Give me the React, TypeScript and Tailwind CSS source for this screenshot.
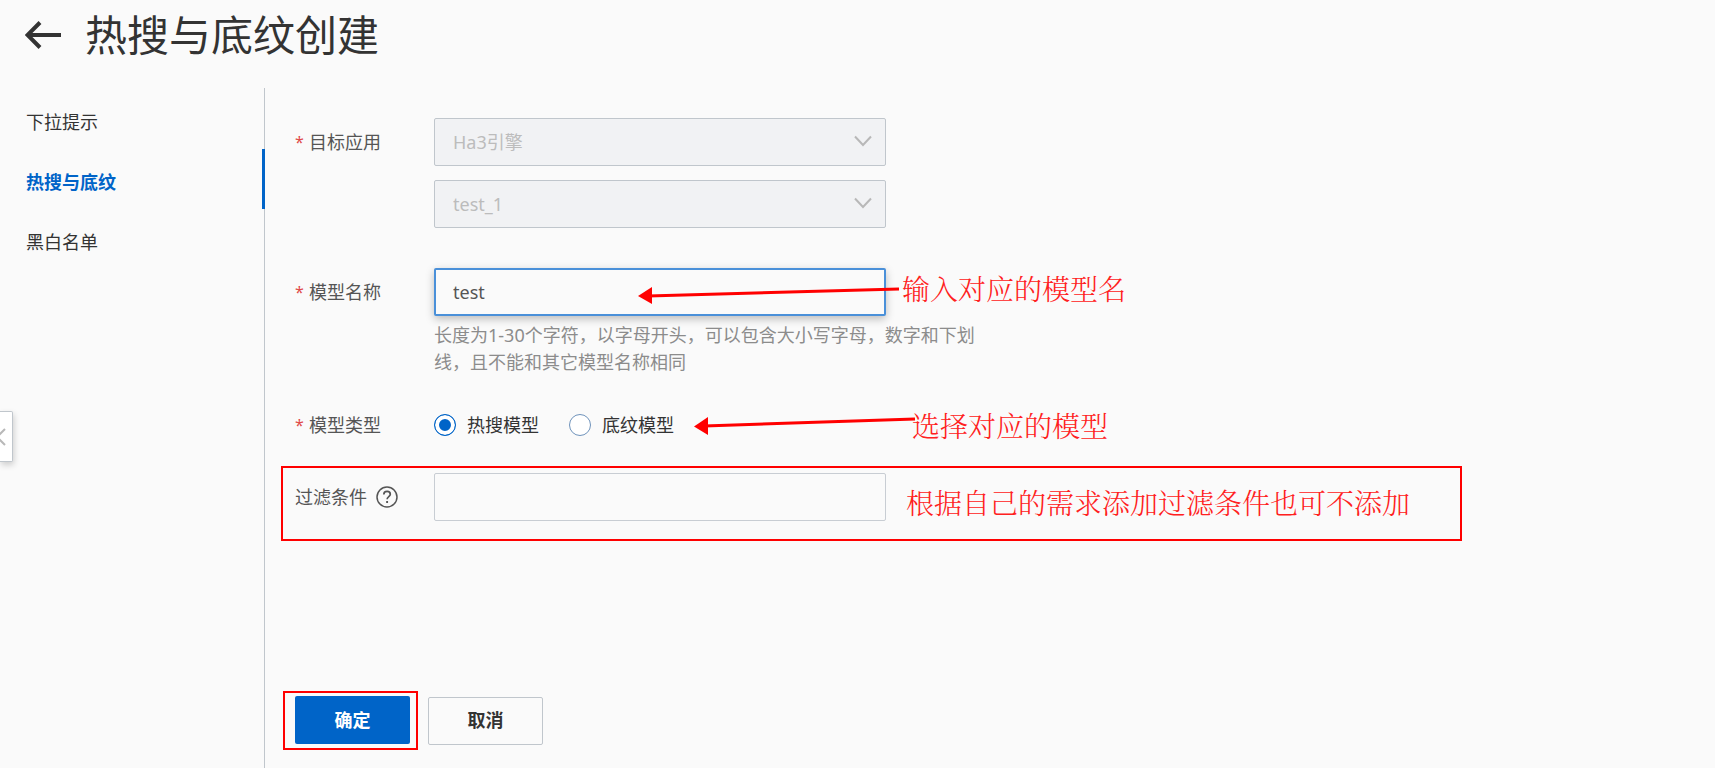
import { useState, type ReactNode } from 'react';

const navItems = ['下拉提示', '热搜与底纹', '黑白名单'];
const modelTypes = ['热搜模型', '底纹模型'];

function Label({ htmlFor, required, children }: { htmlFor: string; required?: boolean; children: ReactNode }) {
    return (
        <div className="flex h-12 w-[139px] shrink-0 items-center text-[#555555]">
            {required && <span className="w-3.5 text-base text-[#e04a4a]">*</span>}
            <label htmlFor={htmlFor}>{children}</label>
        </div>
    );
}

function DisabledSelect({ id, label, value }: { id: string; label: string; value: string }) {
    return (
        <div className="relative">
            <select
                id={id}
                aria-label={label}
                disabled
                className="block h-12 w-full appearance-none rounded-xs border border-[#c0c6cc] bg-[#f1f2f4] px-[18px] text-[#bcbcbc] opacity-100"
            >
                <option>{value}</option>
            </select>
            <svg viewBox="0 0 18 12" className="pointer-events-none absolute top-[17px] right-3.5 h-3 w-[18px]">
                <path d="M1 1.5 9 10 17 1.5" fill="none" stroke="#b8b8b8" strokeWidth="2" />
            </svg>
        </div>
    );
}

function Note({ className, children }: { className: string; children: ReactNode }) {
    return (
        <span
            className={`absolute text-[28px] leading-8 font-light whitespace-nowrap text-[#ff2020] font-['SimSun','Noto_Serif_CJK_SC','Noto_Sans_CJK_SC',serif] ${className}`}
        >
            {children}
        </span>
    );
}

export default function App() {
    const [active, setActive] = useState('热搜与底纹');
    const [name, setName] = useState('test');
    const [type, setType] = useState('热搜模型');
    const [filter, setFilter] = useState('');

    return (
        <div className="relative flex min-h-screen flex-col bg-[#fafafa] text-lg leading-[27px] text-[#333333] font-['Noto_Sans','Noto_Sans_CJK_SC',sans-serif]">
            <header className="flex h-[88px] items-start gap-6 pt-3 pl-[25px]">
                <button type="button" aria-label="返回" className="mt-[9px]">
                    <svg viewBox="0 0 36 28" className="h-7 w-9">
                        <path d="M15 1.5 2.5 14 15 26.5M2.5 14H36" fill="none" stroke="#333333" strokeWidth="4" />
                    </svg>
                </button>
                <h1 className="text-[42px] leading-[46px]">热搜与底纹创建</h1>
            </header>

            <div className="flex flex-1">
                <nav className="w-[265px] shrink-0 border-r border-[#c0c6cc] pt-px">
                    {navItems.map((item) => (
                        <a
                            key={item}
                            href="#"
                            onClick={() => setActive(item)}
                            className={`-mr-px flex h-[60px] items-center border-r-3 pt-1.5 pl-[26px] ${
                                item === active ? 'border-[#0064c8] font-bold text-[#0064c8]' : 'border-transparent'
                            }`}
                        >
                            {item}
                        </a>
                    ))}
                </nav>

                <main className="flex-1 pt-[30px] pl-4">
                    <form onSubmit={(e) => e.preventDefault()}>
                        <div className="flex pl-3.5">
                            <Label htmlFor="engine" required>目标应用</Label>
                            <div className="flex w-[452px] flex-col gap-3.5">
                                <DisabledSelect id="engine" label="目标应用" value="Ha3引擎" />
                                <DisabledSelect id="instance" label="应用实例" value="test_1" />
                            </div>
                        </div>

                        <div className="relative mt-10 flex pl-3.5">
                            <Label htmlFor="name" required>模型名称</Label>
                            <div className="w-[545px]">
                                <input
                                    id="name"
                                    value={name}
                                    onChange={(e) => setName(e.target.value)}
                                    className="block h-12 w-[452px] rounded-xs border-2 border-[#4a90d9] bg-[#fafafa] px-[17px] text-[#555555] shadow-[0_3px_8px_rgba(0,0,0,0.25)] outline-none"
                                />
                                <p className="mt-1.5 text-[#8c8c8c]">
                                    长度为1-30个字符，以字母开头，可以包含大小写字母，数字和下划线，且不能和其它模型名称相同
                                </p>
                            </div>
                            <svg viewBox="0 0 262 18" className="absolute top-[18px] left-[357px] h-[18px] w-[262px]">
                                <path d="M10 10 261 3" stroke="#ff0000" strokeWidth="3" />
                                <path d="M0 10 14 1V18Z" fill="#ff0000" />
                            </svg>
                            <Note className="top-1 left-[621px]">输入对应的模型名</Note>
                        </div>

                        <div className="relative mt-[25px] flex items-center pl-3.5">
                            <Label htmlFor="热搜模型" required>模型类型</Label>
                            <div className="flex gap-[30px]">
                                {modelTypes.map((item) => (
                                    <div key={item} className="flex items-center gap-[11px]">
                                        <input
                                            type="radio"
                                            id={item}
                                            name="type"
                                            checked={item === type}
                                            onChange={() => setType(item)}
                                            className="h-[22px] w-[22px] appearance-none rounded-full border border-[#6f93bb] bg-white checked:border-[#0064c8] checked:bg-[#0064c8] checked:shadow-[inset_0_0_0_4px_white]"
                                        />
                                        <label htmlFor={item}>{item}</label>
                                    </div>
                                ))}
                            </div>
                            <svg viewBox="0 0 222 18" className="absolute top-4 left-[413px] h-[18px] w-[222px]">
                                <path d="M10 9 221 2" stroke="#ff0000" strokeWidth="3" />
                                <path d="M0 9.5 14 0V18Z" fill="#ff0000" />
                            </svg>
                            <Note className="top-2 left-[631px]">选择对应的模型</Note>
                        </div>

                        <div className="relative mt-[17px] flex w-full max-w-[1181px] border-2 border-[#ff0000] pt-[5px] pb-[18px] pl-3">
                            <div className="flex w-[139px] shrink-0 items-center gap-[9px]">
                                <label htmlFor="filter" className="text-[#555555]">过滤条件</label>
                                <button type="button" aria-label="帮助">
                                    <svg viewBox="0 0 22 22" className="h-[22px] w-[22px]" fill="none" stroke="#555555">
                                        <circle cx="11" cy="11" r="10" strokeWidth="1.5" />
                                        <path d="M7.8 8.6c0-2 1.4-3.2 3.3-3.2s3.2 1.2 3.2 2.9c0 2.3-3.2 2.4-3.2 5" strokeWidth="1.7" />
                                        <path d="M11.1 15v2" strokeWidth="1.9" />
                                    </svg>
                                </button>
                            </div>
                            <input
                                id="filter"
                                value={filter}
                                onChange={(e) => setFilter(e.target.value)}
                                className="h-12 w-[452px] rounded-xs border border-[#c8cdd3] px-[18px] outline-none"
                            />
                            <Note className="top-[18px] left-[623px]">根据自己的需求添加过滤条件也可不添加</Note>
                        </div>

                        <div className="mt-[150px] flex items-center gap-2.5 pl-0.5 font-bold">
                            <div className="border-2 border-[#ff0000] pt-[3px] pr-1.5 pb-1 pl-2.5">
                                <button type="submit" className="block h-12 w-[115px] rounded-xs bg-[#0064c8] text-white">
                                    确定
                                </button>
                            </div>
                            <button type="button" className="h-12 w-[115px] rounded-xs border border-[#c0c6cc]">
                                取消
                            </button>
                        </div>
                    </form>
                </main>
            </div>

            {/* Collapse handle over the left edge */}
            <button
                type="button"
                aria-label="收起"
                className="absolute top-[411px] left-0 h-[51px] w-[13px] rounded-r-xs border border-l-0 border-[#c0c6cc] bg-white shadow-[1px_3px_6px_rgba(0,0,0,0.18)]"
            >
                <svg viewBox="0 0 6 18" className="h-[18px] w-1.5">
                    <path d="M5 1-3 9 5 17" fill="none" stroke="#b8b8b8" strokeWidth="2" />
                </svg>
            </button>
        </div>
    );
}
